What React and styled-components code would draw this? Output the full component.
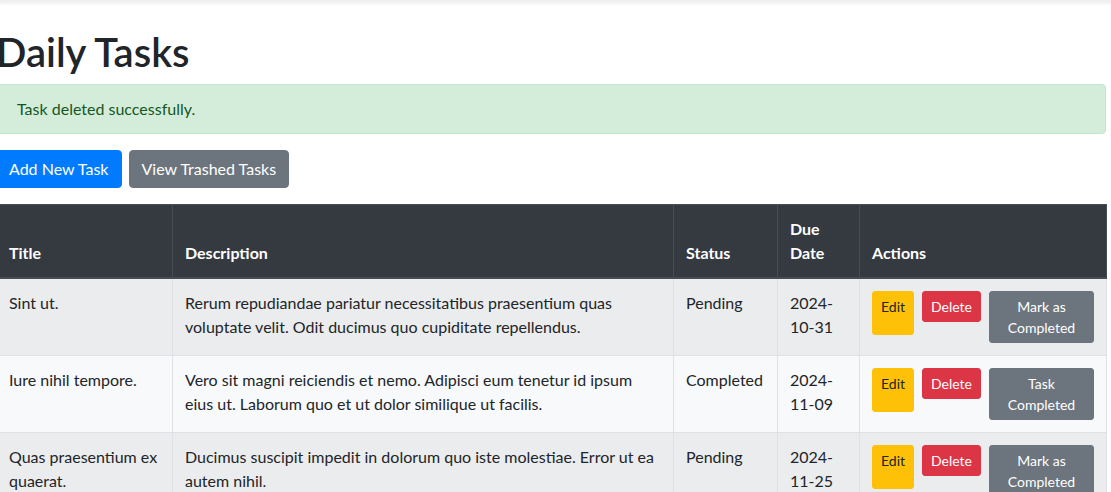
import styled, { createGlobalStyle } from "styled-components";

const GlobalStyle = createGlobalStyle`
    body {
        margin: 0;
        background: #fff;
        color: #212529;
        font-family: "Segoe UI", Lato, "Liberation Sans", sans-serif;
        font-size: 16px;
        line-height: 1.5;
        overflow: hidden;
    }
`;

const tasks = [
    {
        title: "Sint ut.",
        description: "Rerum repudiandae pariatur necessitatibus praesentium quas voluptate velit. Odit ducimus quo cupiditate repellendus.",
        status: "Pending",
        due: "2024-10-31",
        done: false,
    },
    {
        title: "Iure nihil tempore.",
        description: "Vero sit magni reiciendis et nemo. Adipisci eum tenetur id ipsum eius ut. Laborum quo et ut dolor similique ut facilis.",
        status: "Completed",
        due: "2024-11-09",
        done: true,
    },
    {
        title: "Quas praesentium ex quaerat.",
        description: "Ducimus suscipit impedit in dolorum quo iste molestiae. Error ut ea autem nihil.",
        status: "Pending",
        due: "2024-11-25",
        done: false,
    },
];

const columns = [
    { label: "Title", width: 176 },
    { label: "Description", width: 501 },
    { label: "Status", width: 104 },
    { label: "Due Date", width: 82 },
    { label: "Actions", width: 247 },
];

export default function App() {
    return (
        <>
            <GlobalStyle />
            <STopShadow />
            <SContainer>
                <SHeading>Daily Tasks</SHeading>
                <SAlert>Task deleted successfully.</SAlert>
                <SToolbar>
                    <SButton $variant="primary">Add New Task</SButton>
                    <SButton $variant="secondary">View Trashed Tasks</SButton>
                </SToolbar>
                <STable>
                    <colgroup>
                        {columns.map((c) => (
                            <col key={c.label} style={{ width: c.width }} />
                        ))}
                    </colgroup>
                    <thead>
                        <tr>
                            {columns.map((c) => (
                                <STh key={c.label}>{c.label}</STh>
                            ))}
                        </tr>
                    </thead>
                    <tbody>
                        {tasks.map((t, i) => (
                            <STr key={t.title} $odd={i % 2 === 0}>
                                <STd>{t.title}</STd>
                                <STd>{t.description}</STd>
                                <STd>{t.status}</STd>
                                <STd>{t.due}</STd>
                                <STd>
                                    <SActions>
                                        <SSmallButton $variant="warning" $tall>Edit</SSmallButton>
                                        <SSmallButton $variant="danger">Delete</SSmallButton>
                                        <SSmallButton $variant="secondary" $wide>
                                            {t.done ? "Task Completed" : "Mark as Completed"}
                                        </SSmallButton>
                                    </SActions>
                                </STd>
                            </STr>
                        ))}
                    </tbody>
                </STable>
            </SContainer>
        </>
    );
}

const variants = {
    primary: { bg: "#007bff", border: "#007bff", color: "#fff" },
    secondary: { bg: "#6c757d", border: "#6c757d", color: "#fff" },
    warning: { bg: "#ffc107", border: "#ffc107", color: "#212529" },
    danger: { bg: "#dc3545", border: "#dc3545", color: "#fff" },
};

const STopShadow = styled.div`
    height: 4px;
    background: linear-gradient(#eeeeee, #f6f6f6);
    box-shadow: 0 1px 2px rgba(0, 0, 0, 0.03);
`;

const SContainer = styled.div`
    width: 1110px;
    margin-left: -4px;
    padding-top: 24px;
`;

const SHeading = styled.h1`
    margin: 0 0 8px;
    font-size: 40px;
    font-weight: 600;
    line-height: 1.2;
`;

const SAlert = styled.div`
    padding: 12px 20px;
    margin-bottom: 16px;
    border: 1px solid #c3e6cb;
    border-radius: 4px;
    background: #d4edda;
    color: #155724;
`;

const SToolbar = styled.div`
    display: flex;
    gap: 7px;
    margin-bottom: 16px;
`;

const SButton = styled.button`
    font-family: inherit;
    font-size: 16px;
    line-height: 24px;
    padding: 6px 12px;
    border-radius: 4px;
    border: 1px solid ${(p) => variants[p.$variant].border};
    background: ${(p) => variants[p.$variant].bg};
    color: ${(p) => variants[p.$variant].color};
`;

const STable = styled.table`
    width: 1110px;
    table-layout: fixed;
    border-collapse: collapse;
`;

const STh = styled.th`
    padding: 12px;
    text-align: left;
    vertical-align: bottom;
    font-weight: 700;
    color: #fff;
    background: #343a40;
    border: 1px solid #454d55;
    border-bottom-width: 2px;
`;

const STr = styled.tr`
    background: ${(p) => (p.$odd ? "#ebeced" : "#f8f9fa")};
`;

const STd = styled.td`
    padding: 12px;
    vertical-align: top;
    border: 1px solid #dee2e6;
`;

const SActions = styled.div`
    display: flex;
    align-items: flex-start;
    gap: 8px;
`;

const SSmallButton = styled.button`
    font-family: inherit;
    font-size: 14px;
    line-height: 21px;
    padding: 4px 8px;
    border-radius: 3px;
    border: 1px solid ${(p) => variants[p.$variant].border};
    background: ${(p) => variants[p.$variant].bg};
    color: ${(p) => variants[p.$variant].color};
    height: ${(p) => (p.$tall ? "44px" : "auto")};
    width: ${(p) => (p.$wide ? "107px" : "auto")};
    display: flex;
    align-items: flex-start;
    justify-content: center;
    text-align: center;
`;
